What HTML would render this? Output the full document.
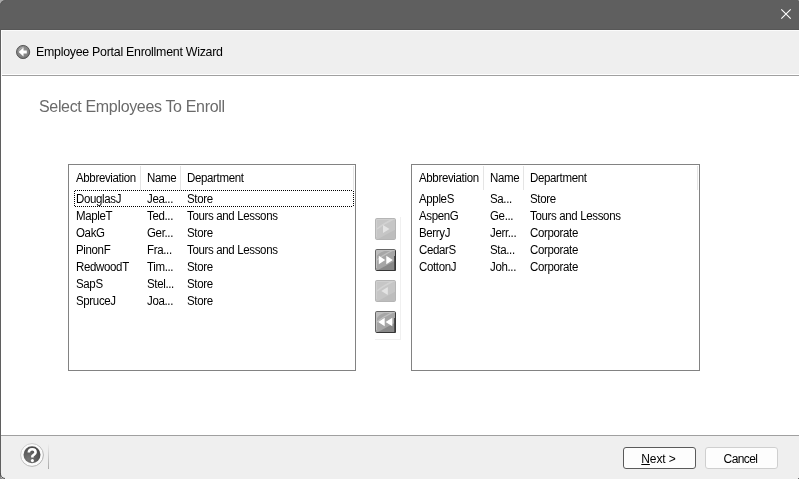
<!DOCTYPE html>
<html><head><meta charset="utf-8">
<style>
*{margin:0;padding:0;box-sizing:border-box}
html,body{width:799px;height:479px;overflow:hidden;background:#fff}
body{-webkit-font-smoothing:antialiased}
.t,.cell,.pb{will-change:transform}
body{position:relative;font-family:"Liberation Sans",sans-serif}
.abs{position:absolute}
#titlebar{left:0;top:0;width:799px;height:30px;background:#5f5f5f}
#tbline{left:0;top:29px;width:799px;height:1px;background:#575757}
#header{left:0;top:30px;width:799px;height:45px;background:#efefef;border-top:1px solid #fbfbfb;border-bottom:1px solid #fff}
#hdrline{left:0;top:75px;width:799px;height:1px;background:#a0a0a0}
#leftborder{left:0;top:30px;width:1px;height:449px;background:#5f5f5f}
#leftbhl{left:1px;top:30px;width:1px;height:46px;background:#fbfbfb}
#footer{left:0;top:435px;width:799px;height:44px;background:#efefef;border-top:1px solid #a0a0a0}
.t{position:absolute;white-space:nowrap;line-height:1}
#wiztitle{left:36px;top:46px;font-size:12.4px;letter-spacing:-0.27px;color:#000}
#pagetitle{left:39px;top:99px;font-size:16px;letter-spacing:-0.34px;color:#6a6a6a}
.list{position:absolute;top:164px;width:288px;height:207px;border:1px solid #828282;background:#fff}
.hdr{position:absolute;left:0;top:0;height:25px;width:286px}
.div{position:absolute;top:1px;width:1px;height:24px;background:#e5e5e5}
.cell{position:absolute;font-size:11.5px;letter-spacing:-0.35px;color:#000;white-space:nowrap;line-height:1;transform:scaleY(1.1);transform-origin:0 9px}
.focus{position:absolute;left:5px;top:25px;width:280px;height:17px}
.fh{position:absolute;height:1px;background:repeating-linear-gradient(90deg,#000 0 1px,transparent 1px 2px)}
.fv{position:absolute;width:1px;background:repeating-linear-gradient(180deg,#000 0 1px,transparent 1px 2px)}
.btn{position:absolute;left:375px;width:21px;height:22px;border-radius:3px}
.dis{background:#c9c9c9;border:1px solid #bdbdbd}
.ena{background:linear-gradient(135deg,#a8a8a8 0%,#9a9a9a 50%,#7e7e7e 51%,#777 100%);border:1px solid #4a4a4a}
.pb{position:absolute;top:447px;width:73px;height:22px;border-radius:3px;background:#fdfdfd;font-size:12px;color:#000;text-align:center;line-height:20px}
</style></head><body>
<div id="titlebar" class="abs"></div>
<div id="tbline" class="abs"></div>
<svg class="abs" style="left:780px;top:8px" width="12" height="12" viewBox="0 0 12 12"><path d="M1.3 1.3L10.7 10.7M10.7 1.3L1.3 10.7" stroke="#fff" stroke-width="1.1" fill="none"/></svg>
<div id="header" class="abs"></div>
<div id="hdrline" class="abs"></div>
<svg class="abs" style="left:13px;top:42px" width="20" height="20" viewBox="0 0 20 20">
<defs><radialGradient id="bg1" cx="0.45" cy="0.4" r="0.6"><stop offset="0" stop-color="#9a9a9a"/><stop offset="0.8" stop-color="#808080"/><stop offset="1" stop-color="#6a6a6a"/></radialGradient></defs>
<circle cx="10.1" cy="10" r="6.6" fill="url(#bg1)" stroke="#505050" stroke-width="0.9"/>
<path d="M5.6 9.2 A5.2 5.2 0 0 1 10.5 5.2" stroke="#b8b8b8" stroke-width="0.8" fill="none"/>
<path d="M5.6 10L10.5 5.6V8.4H13.8V11.6H10.5V14.4Z" fill="#fff"/>
</svg>
<div id="wiztitle" class="t">Employee Portal Enrollment Wizard</div>
<div id="pagetitle" class="t">Select Employees To Enroll</div>

<div class="list" style="left:68px">
 <div class="div" style="left:71px"></div><div class="div" style="left:111px"></div><div class="div" style="left:284px"></div>
 <div class="cell" style="left:7px;top:8px">Abbreviation</div>
 <div class="cell" style="left:78px;top:8px">Name</div>
 <div class="cell" style="left:118px;top:8px">Department</div>
 <div class="focus"><div class="fh" style="left:1px;top:0;width:278px"></div><div class="fh" style="left:1px;top:16px;width:278px"></div><div class="fv" style="left:0;top:1px;height:15px"></div><div class="fv" style="left:279px;top:1px;height:15px"></div></div>
 <div class="cell" style="left:7px;top:29px">DouglasJ</div><div class="cell" style="left:78px;top:29px">Jea...</div><div class="cell" style="left:118px;top:29px">Store</div>
 <div class="cell" style="left:7px;top:46px">MapleT</div><div class="cell" style="left:78px;top:46px">Ted...</div><div class="cell" style="left:118px;top:46px">Tours and Lessons</div>
 <div class="cell" style="left:7px;top:63px">OakG</div><div class="cell" style="left:78px;top:63px">Ger...</div><div class="cell" style="left:118px;top:63px">Store</div>
 <div class="cell" style="left:7px;top:80px">PinonF</div><div class="cell" style="left:78px;top:80px">Fra...</div><div class="cell" style="left:118px;top:80px">Tours and Lessons</div>
 <div class="cell" style="left:7px;top:97px">RedwoodT</div><div class="cell" style="left:78px;top:97px">Tim...</div><div class="cell" style="left:118px;top:97px">Store</div>
 <div class="cell" style="left:7px;top:114px">SapS</div><div class="cell" style="left:78px;top:114px">Stel...</div><div class="cell" style="left:118px;top:114px">Store</div>
 <div class="cell" style="left:7px;top:131px">SpruceJ</div><div class="cell" style="left:78px;top:131px">Joa...</div><div class="cell" style="left:118px;top:131px">Store</div>
</div>

<div class="list" style="left:411px;width:289px">
 <div class="div" style="left:71px"></div><div class="div" style="left:111px"></div><div class="div" style="left:285px"></div>
 <div class="cell" style="left:7px;top:8px">Abbreviation</div>
 <div class="cell" style="left:78px;top:8px">Name</div>
 <div class="cell" style="left:118px;top:8px">Department</div>
 <div class="cell" style="left:7px;top:29px">AppleS</div><div class="cell" style="left:78px;top:29px">Sa...</div><div class="cell" style="left:118px;top:29px">Store</div>
 <div class="cell" style="left:7px;top:46px">AspenG</div><div class="cell" style="left:78px;top:46px">Ge...</div><div class="cell" style="left:118px;top:46px">Tours and Lessons</div>
 <div class="cell" style="left:7px;top:63px">BerryJ</div><div class="cell" style="left:78px;top:63px">Jerr...</div><div class="cell" style="left:118px;top:63px">Corporate</div>
 <div class="cell" style="left:7px;top:80px">CedarS</div><div class="cell" style="left:78px;top:80px">Sta...</div><div class="cell" style="left:118px;top:80px">Corporate</div>
 <div class="cell" style="left:7px;top:97px">CottonJ</div><div class="cell" style="left:78px;top:97px">Joh...</div><div class="cell" style="left:118px;top:97px">Corporate</div>
</div>

<div class="abs" style="left:400px;top:217px;width:1px;height:123px;background:#f0f0f0"></div>
<div class="abs" style="left:375px;top:339px;width:26px;height:1px;background:#f0f0f0"></div>
<svg class="abs" style="left:375px;top:218px" width="21" height="22" viewBox="0 0 21 22">
<rect x="0.5" y="0.5" width="20" height="21" rx="1.2" fill="#c6c6c6" stroke="#b5b5b5"/>
<path d="M1.5 1.5H19.5M1.5 2V19" stroke="#cfcfcf" stroke-width="1" fill="none"/>
<path d="M2 11Q8 6 17.5 1.5" stroke="#d2d2d2" stroke-width="1.5" fill="none"/>
<path d="M3 21L20 11.8V21Z" fill="#bdbdbd"/>
<path d="M8 7V15L14.5 11Z" fill="#e4e4e4"/>
</svg>
<svg class="abs" style="left:375px;top:249px" width="21" height="22" viewBox="0 0 21 22">
<rect x="0.5" y="0.5" width="20" height="21" rx="1.2" fill="#a6a6a6" stroke="#666"/>
<path d="M1.5 1.5H19.5M1.5 2V19" stroke="#c2c2c2" stroke-width="1" fill="none"/>
<path d="M1 9Q3 3 12 1.2L2 2Z" fill="#bdbdbd"/>
<path d="M2 11Q8 6 17.5 1.5" stroke="#c0c0c0" stroke-width="1.3" fill="none"/>
<path d="M3 21L20 11.8V21Z" fill="#888"/>
<path d="M19.5 7V21" stroke="#4e4e4e" stroke-width="1"/>
<path d="M20.5 1.5V21.5H1.5" stroke="#363636" stroke-width="1" fill="none"/>
<path d="M3.8 6.8V15.2L10.2 11ZM11.3 6.8V15.2L17.8 11Z" fill="#fff"/>
</svg>
<svg class="abs" style="left:375px;top:280px" width="21" height="22" viewBox="0 0 21 22">
<rect x="0.5" y="0.5" width="20" height="21" rx="1.2" fill="#c6c6c6" stroke="#b5b5b5"/>
<path d="M1.5 1.5H19.5M1.5 2V19" stroke="#cfcfcf" stroke-width="1" fill="none"/>
<path d="M2 11Q8 6 17.5 1.5" stroke="#d2d2d2" stroke-width="1.5" fill="none"/>
<path d="M3 21L20 11.8V21Z" fill="#bdbdbd"/>
<path d="M12.8 7V15L6.3 11Z" fill="#e4e4e4"/>
</svg>
<svg class="abs" style="left:375px;top:311px" width="21" height="22" viewBox="0 0 21 22">
<rect x="0.5" y="0.5" width="20" height="21" rx="1.2" fill="#a6a6a6" stroke="#666"/>
<path d="M1.5 1.5H19.5M1.5 2V19" stroke="#c2c2c2" stroke-width="1" fill="none"/>
<path d="M1 9Q3 3 12 1.2L2 2Z" fill="#bdbdbd"/>
<path d="M2 11Q8 6 17.5 1.5" stroke="#c0c0c0" stroke-width="1.3" fill="none"/>
<path d="M3 21L20 11.8V21Z" fill="#888"/>
<path d="M19.5 7V21" stroke="#4e4e4e" stroke-width="1"/>
<path d="M20.5 1.5V21.5H1.5" stroke="#363636" stroke-width="1" fill="none"/>
<path d="M9.7 6.8V15.2L3.2 11ZM17.3 6.8V15.2L10.6 11Z" fill="#fff"/>
</svg>

<div id="footer" class="abs"></div>
<div id="leftborder" class="abs"></div><div id="leftbhl" class="abs"></div>
<svg class="abs" style="left:18px;top:441px" width="32" height="30" viewBox="0 0 32 30">
<defs><radialGradient id="hg" cx="0.3" cy="0.75" r="0.9"><stop offset="0" stop-color="#767676"/><stop offset="1" stop-color="#434343"/></radialGradient>
<linearGradient id="hr" x1="0" y1="0" x2="1" y2="1"><stop offset="0" stop-color="#d6d6d6"/><stop offset="1" stop-color="#a8a8a8"/></linearGradient></defs>
<circle cx="14" cy="14" r="11.4" fill="#fbfbfb" stroke="url(#hr)" stroke-width="1"/>
<circle cx="14" cy="13.8" r="8.5" fill="url(#hg)"/>
<path d="M10.8 11.6C10.8 9.3 12.4 8.2 14.2 8.2C16.2 8.2 17.6 9.4 17.6 11.2C17.6 13.2 15.2 13.7 14.4 15.2V16.6" stroke="#fff" stroke-width="2.6" fill="none"/>
<circle cx="14.4" cy="19.6" r="1.55" fill="#fff"/>
</svg>
<div class="abs" style="left:48px;top:443px;width:1px;height:26px;background:linear-gradient(#f0f0f0,#a8a8a8)"></div>
<div class="pb" style="left:623px;border:1px solid #5a5a5a;letter-spacing:-0.1px;padding-top:1px;text-indent:-2px"><span style="text-decoration:underline">N</span>ext &gt;</div>
<div class="pb" style="left:705px;border:1px solid #cfcfcf;letter-spacing:-0.6px;padding-top:1px;text-indent:-2px">Cancel</div>
<svg class="abs" style="left:0;top:0" width="7" height="7" viewBox="0 0 7 7"><path d="M0 0H5.5A5.5 5.5 0 0 0 0 5.5Z" fill="#a8a8a8"/><path d="M5.6 0.4A5.2 5.2 0 0 0 0.4 5.6" stroke="#585858" stroke-width="0.7" fill="none"/></svg>
<svg class="abs" style="left:797px;top:0" width="2" height="2" viewBox="0 0 2 2"><rect x="1" y="0" width="1" height="1" fill="#8a8a8a"/></svg>
<svg class="abs" style="left:0;top:473px" width="6" height="6" viewBox="0 0 6 6"><path d="M0 0.3A5 5 0 0 0 4.7 6H0Z" fill="#8a8a8a"/><path d="M0.5 0A4.8 4.8 0 0 0 5 5.5" stroke="#505050" stroke-width="1" fill="none"/></svg>
<div class="abs" style="left:798px;top:478px;width:1px;height:1px;background:#666"></div>
</body></html>
